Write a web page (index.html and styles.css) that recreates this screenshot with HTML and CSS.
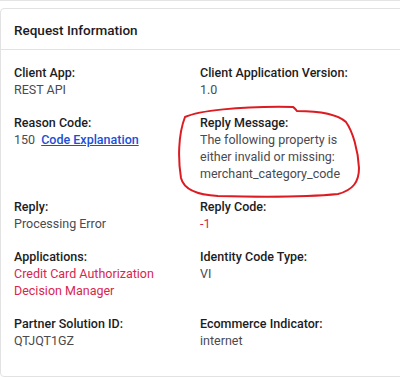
FILE: index.html
```html
<!DOCTYPE html>
<html lang="en">
<head>
    <meta charset="UTF-8">
    <title>Request Information</title>
    <link rel="stylesheet" href="styles.css">
</head>
<body>
    <div class="top-line"></div>
    <div class="card">
        <div class="card-header">Request Information</div>
        <div class="card-body">
            <div class="field">
                <div class="label">Client App:</div>
                <div class="value">REST API</div>
            </div>
            <div class="field">
                <div class="label">Client Application Version:</div>
                <div class="value">1.0</div>
            </div>
            <div class="field">
                <div class="label">Reason Code:</div>
                <div class="value">150 <a href="#" class="link">Code Explanation</a></div>
            </div>
            <div class="field marked">
                <div class="label">Reply Message:</div>
                <div class="value">The following property is<br>either invalid or missing:<br>merchant_category_code</div>
                <svg class="scribble" width="190" height="100" viewBox="0 0 190 100">
                    <path d="M7 17 C 20 11, 60 6, 115 7 C 117 8, 118 10, 119 11 C 135 11, 158 13, 168 22 C 175 32, 180 50, 181 68 C 181 82, 175 90, 160 94 C 130 97, 80 97, 40 96 C 20 95, 6 90, 3 78 C 0 60, 0 35, 7 17 Z" fill="none" stroke="#dc1c22" stroke-width="2" stroke-linejoin="round"/>
                </svg>
            </div>
            <div class="field">
                <div class="label">Reply:</div>
                <div class="value">Processing Error</div>
            </div>
            <div class="field">
                <div class="label">Reply Code:</div>
                <div class="value red">-1</div>
            </div>
            <div class="field">
                <div class="label">Applications:</div>
                <div class="value red">Credit Card Authorization<br>Decision Manager</div>
            </div>
            <div class="field">
                <div class="label">Identity Code Type:</div>
                <div class="value">VI</div>
            </div>
            <div class="field">
                <div class="label">Partner Solution ID:</div>
                <div class="value">QTJQT1GZ</div>
            </div>
            <div class="field">
                <div class="label">Ecommerce Indicator:</div>
                <div class="value">internet</div>
            </div>
        </div>
    </div>
</body>
</html>
```

FILE: styles.css
```css
body {
    margin: 0;
    background: white;
    font-family: Roboto, "Liberation Sans", sans-serif;
    overflow: hidden;
}
.top-line {
    height: 1px;
    background: #e4e4e4;
}
.card {
    margin-top: 7px;
    width: 430px;
    border: 1px solid #e2e2e2;
    border-radius: 4px;
    background: white;
}
.card-header {
    height: 40px;
    line-height: 42px;
    padding-left: 13px;
    font-size: 13.5px;
    font-weight: 500;
    color: #1c1c24;
    border-bottom: 1px solid #e2e2e2;
}
.card-body {
    display: grid;
    grid-template-columns: 186px 200px;
    row-gap: 16px;
    padding: 14px 0 27px 13px;
}
.field {
    position: relative;
    font-size: 12.5px;
    line-height: 17px;
}
.label {
    font-weight: 500;
    color: #1c1c24;
}
.value {
    color: #4a4a50;
}
.value.red {
    color: #d8264e;
}
.link {
    margin-left: 3px;
    color: #1a4fd6;
    font-weight: 500;
    text-decoration: underline;
}
.scribble {
    position: absolute;
    left: -22px;
    top: -14px;
}
```
